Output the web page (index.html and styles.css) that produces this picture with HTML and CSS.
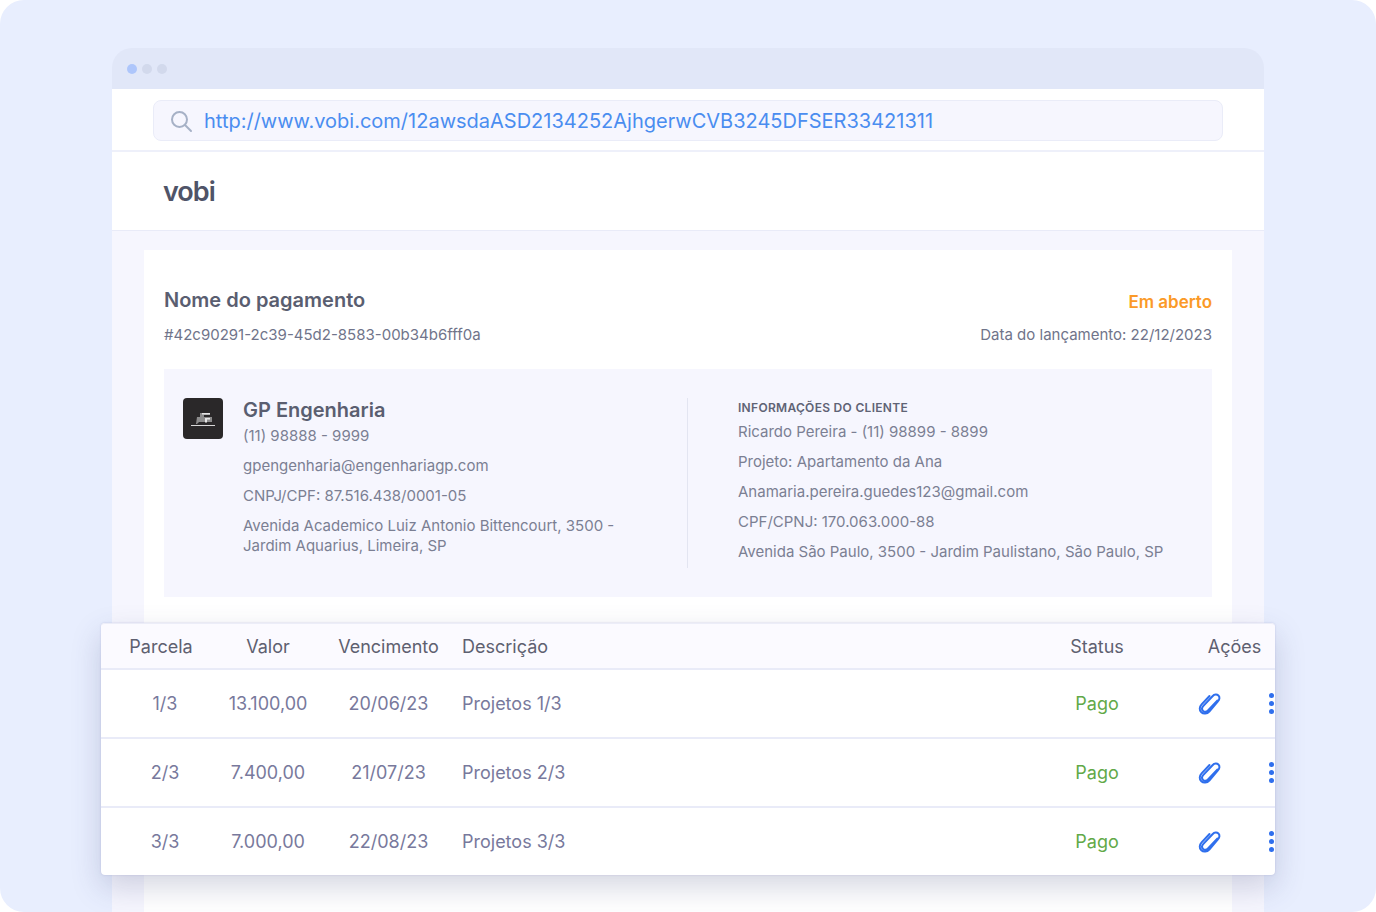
FILE: index.html
```html
<!DOCTYPE html>
<html lang="en">
<head>
    <meta charset="utf-8">
    <title>Vobi - Pagamento</title>
    <link rel="stylesheet" href="styles.css">
</head>
<body>
    <div class="stage">
        <div class="window">
            <div class="titlebar">
                <span class="dot dot-active"></span>
                <span class="dot"></span>
                <span class="dot"></span>
            </div>
            <div class="addressbar">
                <div class="url-field">
                    <svg class="search-icon" width="24" height="24" viewBox="0 0 24 24" fill="none" stroke="#a6b1c6" stroke-width="2" stroke-linecap="round">
                        <circle cx="10.5" cy="10.5" r="7.5"/>
                        <path d="M16 16l6 6"/>
                    </svg>
                    <span class="url">http://www.vobi.com/12awsdaASD2134252AjhgerwCVB3245DFSER33421311</span>
                </div>
            </div>
            <div class="brandbar">
                <span class="logo">vobi</span>
            </div>
            <div class="content">
                <div class="card">
                    <div class="card-head">
                        <h1 class="pay-title">Nome do pagamento</h1>
                        <span class="pay-status">Em aberto</span>
                    </div>
                    <div class="card-sub">
                        <span>#42c90291-2c39-45d2-8583-00b34b6fff0a</span>
                        <span>Data do lançamento: 22/12/2023</span>
                    </div>
                    <div class="info-panel">
                        <div class="company">
                            <div class="company-logo">
                                <svg width="26" height="18" viewBox="0 0 26 18">
                                    <path d="M1 15.5h24" stroke="#d8d8d8" stroke-width="1"/>
                                    <path d="M7 7h3V3h10v2h-6v2h8v5H9L7 14H6z" fill="#8c8c8c"/>
                                    <path d="M12 3h8v1.5h-8zM15 8h5v1.5h-3v3h-2z" fill="#e6e6e6"/>
                                </svg>
                            </div>
                            <div class="company-data">
                                <h2 class="company-name">GP Engenharia</h2>
                                <p class="line line-first">(11) 98888 - 9999</p>
                                <p class="line">gpengenharia@engenhariagp.com</p>
                                <p class="line">CNPJ/CPF: 87.516.438/0001-05</p>
                                <p class="line">Avenida Academico Luiz Antonio Bittencourt, 3500 -<br>Jardim Aquarius, Limeira, SP</p>
                            </div>
                        </div>
                        <div class="client">
                            <h3 class="client-title">INFORMAÇÕES DO CLIENTE</h3>
                            <p class="line line-first">Ricardo Pereira - (11) 98899 - 8899</p>
                            <p class="line">Projeto: Apartamento da Ana</p>
                            <p class="line">Anamaria.pereira.guedes123@gmail.com</p>
                            <p class="line">CPF/CPNJ: 170.063.000-88</p>
                            <p class="line">Avenida São Paulo, 3500 - Jardim Paulistano, São Paulo, SP</p>
                        </div>
                    </div>
                    <div class="table">
                        <div class="row row-head">
                            <span class="cell">Parcela</span>
                            <span class="cell">Valor</span>
                            <span class="cell">Vencimento</span>
                            <span class="cell cell-left">Descrição</span>
                            <span class="cell">Status</span>
                            <span class="cell cell-actions-title">Ações</span>
                        </div>
                        <div class="row">
                            <span class="cell cell-num">1/3</span>
                            <span class="cell">13.100,00</span>
                            <span class="cell">20/06/23</span>
                            <span class="cell cell-left">Projetos 1/3</span>
                            <span class="cell cell-paid">Pago</span>
                            <span class="cell cell-actions">
                                <svg class="clip" width="24" height="24" viewBox="0 0 24 24" fill="none" stroke="#2f6fed" stroke-width="2" stroke-linecap="round" stroke-linejoin="round"><path d="M20.5 8.5L11 18.5c-1.5 1.6-3.7 1.7-5 .4s-1.1-3.400.4-5L15.500 4.200c1.900-2 4.400-2.100 5.900-.7s1.400 3.900-.5 5.900L12.300 19.500c-2.300 2.400-5.800 2.800-8 .8s-2-5.500.3-7.900L12.500 4"/></svg>
                                <span class="more"><i></i><i></i><i></i></span>
                            </span>
                        </div>
                        <div class="row">
                            <span class="cell cell-num">2/3</span>
                            <span class="cell">7.400,00</span>
                            <span class="cell">21/07/23</span>
                            <span class="cell cell-left">Projetos 2/3</span>
                            <span class="cell cell-paid">Pago</span>
                            <span class="cell cell-actions">
                                <svg class="clip" width="24" height="24" viewBox="0 0 24 24" fill="none" stroke="#2f6fed" stroke-width="2" stroke-linecap="round" stroke-linejoin="round"><path d="M20.5 8.5L11 18.5c-1.5 1.6-3.7 1.7-5 .4s-1.1-3.400.4-5L15.500 4.200c1.900-2 4.400-2.100 5.900-.7s1.400 3.900-.5 5.900L12.300 19.500c-2.300 2.400-5.800 2.800-8 .8s-2-5.500.3-7.900L12.500 4"/></svg>
                                <span class="more"><i></i><i></i><i></i></span>
                            </span>
                        </div>
                        <div class="row">
                            <span class="cell cell-num">3/3</span>
                            <span class="cell">7.000,00</span>
                            <span class="cell">22/08/23</span>
                            <span class="cell cell-left">Projetos 3/3</span>
                            <span class="cell cell-paid">Pago</span>
                            <span class="cell cell-actions">
                                <svg class="clip" width="24" height="24" viewBox="0 0 24 24" fill="none" stroke="#2f6fed" stroke-width="2" stroke-linecap="round" stroke-linejoin="round"><path d="M20.5 8.5L11 18.5c-1.5 1.6-3.7 1.7-5 .4s-1.1-3.400.4-5L15.500 4.200c1.900-2 4.400-2.100 5.900-.7s1.400 3.900-.5 5.900L12.300 19.500c-2.300 2.400-5.800 2.800-8 .8s-2-5.500.3-7.900L12.500 4"/></svg>
                                <span class="more"><i></i><i></i><i></i></span>
                            </span>
                        </div>
                    </div>
                </div>
            </div>
        </div>
    </div>
</body>
</html>
```

FILE: styles.css
```css
* {
    box-sizing: border-box;
}

html, body {
    margin: 0;
    height: 100%;
    background: #ffffff;
}

body {
    font-family: Inter, "Liberation Sans", sans-serif;
    color: #6d7183;
    overflow: hidden;
}

h1, h2, h3, p {
    margin: 0;
}

.stage {
    width: 1376px;
    height: 912px;
    padding: 48px 112px 0;
    background: #e8eefe;
    border-radius: 24px;
    overflow: hidden;
}

.window {
    display: flex;
    flex-direction: column;
    height: 864px;
}

.titlebar {
    height: 41px;
    flex-shrink: 0;
    display: flex;
    align-items: center;
    gap: 5px;
    padding: 0 15px;
    background: #e1e7f8;
    border-radius: 20px 20px 0 0;
}

.dot {
    width: 10px;
    height: 10px;
    border-radius: 50%;
    background: #d2d9ec;
}

.dot-active {
    background: #aec6fb;
}

.addressbar {
    height: 63px;
    flex-shrink: 0;
    padding: 11px 41px 0;
    background: #ffffff;
    border-bottom: 2px solid #eef0fa;
}

.url-field {
    height: 41px;
    display: flex;
    align-items: center;
    gap: 11px;
    padding: 0 15px;
    background: #f6f6fe;
    border: 1px solid #eaecf8;
    border-radius: 8px;
}

.url {
    font-size: 20px;
    color: #4a8df0;
}

.brandbar {
    height: 79px;
    flex-shrink: 0;
    display: flex;
    align-items: center;
    padding-left: 51px;
    background: #ffffff;
    border-bottom: 1px solid #e9ebf8;
}

.logo {
    font-size: 27px;
    font-weight: 600;
    letter-spacing: -1px;
    color: #4f5468;
}

.content {
    flex: 1;
    padding: 19px 32px 0;
    background: #f6f6fe;
}

.card {
    height: 100%;
    padding: 30px 20px 0;
    background: #ffffff;
}

.card-head {
    display: flex;
    justify-content: space-between;
    align-items: flex-end;
    height: 32px;
}

.pay-title {
    font-size: 20px;
    font-weight: 600;
    color: #5a5e70;
}

.pay-status {
    font-size: 17px;
    font-weight: 600;
    color: #fb9a28;
}

.card-sub {
    display: flex;
    justify-content: space-between;
    margin-top: 13px;
    font-size: 15px;
    color: #70748a;
}

.info-panel {
    display: flex;
    height: 228px;
    margin-top: 25px;
    padding: 29px 0 0 19px;
    background: #f6f6fe;
}

.company {
    display: flex;
    gap: 20px;
    width: 505px;
    height: 170px;
    border-right: 1px solid #e3e5f1;
}

.company-logo {
    width: 40px;
    height: 41px;
    display: flex;
    align-items: center;
    justify-content: center;
    background: #2a2829;
    border-radius: 4px;
}

.company-name {
    font-size: 20px;
    font-weight: 600;
    line-height: 24px;
    color: #5a5e70;
}

.line {
    margin-top: 10px;
    font-size: 15px;
    line-height: 20px;
    color: #7b7f93;
}

.line-first {
    margin-top: 4px;
}

.client {
    padding-left: 50px;
}

.client-title {
    font-size: 12px;
    font-weight: 600;
    line-height: 20px;
    letter-spacing: .3px;
    color: #5f6375;
}

.table {
    position: relative;
    margin: 26px -63px 0;
    background: #ffffff;
    border-radius: 4px;
    box-shadow: 0 0 2px rgba(120, 130, 190, .35), 0 12px 30px rgba(60, 70, 120, .22);
}

.row {
    display: grid;
    grid-template-columns: 120px 94px 147px 585px 100px 168px;
    align-items: center;
    height: 69px;
    font-size: 18px;
    color: #78799c;
    border-top: 2px solid #e9ebf8;
}

.row-head {
    height: 45px;
    color: #5e6070;
    background: #fbfaff;
    border-top: 1px solid #ecedf8;
    border-radius: 4px 4px 0 0;
}

.cell {
    text-align: center;
}

.cell-left {
    text-align: left;
}

.cell-num {
    padding-left: 8px;
}

.cell-actions-title {
    padding-left: 7px;
}

.cell-paid {
    color: #62a948;
}

.cell-actions {
    display: flex;
    align-items: center;
    padding-left: 50px;
    gap: 48px;
}

.clip {
    flex-shrink: 0;
}

.more {
    display: flex;
    flex-direction: column;
    gap: 3px;
}

.more i {
    width: 5px;
    height: 5px;
    border-radius: 50%;
    background: #2f6fed;
}
```
